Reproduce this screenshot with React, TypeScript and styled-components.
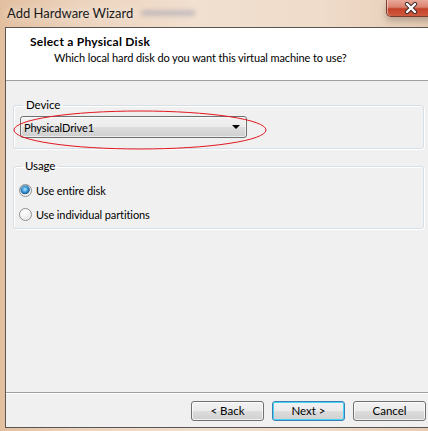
import React from "react";
import styled, { createGlobalStyle } from "styled-components";

const GlobalStyle = createGlobalStyle`
  html, body { margin: 0; padding: 0; background: #e6c8ab; }
  * { box-sizing: border-box; }
`;

const UI_FONT = `"Segoe UI", Lato, "Noto Sans", sans-serif`;

const Window = styled.div`
  width: 428px;
  height: 431px;
  overflow: hidden;
  display: flex;
  flex-direction: column;
  font-family: ${UI_FONT};
  font-size: 11px;
  letter-spacing: -0.1px;
  color: #000;
  background: linear-gradient(90deg, #e2bf9f 0%, #ecd3bd 18%, #f1dfcf 45%, #efdccb 75%, #e7ccb4 100%);
`;

const TitleBar = styled.div`
  height: 27px;
  flex: none;
  display: flex;
  align-items: flex-start;
`;

const Caption = styled.span`
  margin: 4px 0 0 7px;
  font-size: 13px;
  letter-spacing: 0;
  line-height: 18px;
  color: #1a1a1a;
  text-shadow: 0 0 8px rgba(255, 255, 255, 0.9);
`;

const Smudge = styled.span`
  margin: 10px 0 0 8px;
  width: 54px;
  height: 6px;
  border-radius: 3px;
  background: rgba(150, 150, 170, 0.45);
  filter: blur(2px);
`;

const CloseButton = styled.div`
  margin-left: auto;
  margin-right: -7px;
  width: 49px;
  height: 17px;
  flex: none;
  display: flex;
  align-items: center;
  justify-content: center;
  border: 1px solid #7a3a2c;
  border-top: none;
  border-radius: 0 0 5px 5px;
  background: linear-gradient(180deg, #e9a898 0%, #d9826e 45%, #c4412a 55%, #cf5a3d 100%);
  box-shadow: inset 1px 0 0 rgba(255, 255, 255, 0.5), 0 4px 6px rgba(90, 80, 70, 0.35);
`;

const Client = styled.div`
  margin-left: 5px;
  width: 430px;
  height: 401px;
  flex: none;
  display: flex;
  flex-direction: column;
  background: #f0f0f0;
  border: 1px solid #5a5550;
`;

const Header = styled.div`
  height: 53px;
  flex: none;
  background: #ffffff;
  border-bottom: 1px solid #a0a0a0;
  padding: 6px 0 0 24px;
`;

const HeaderTitle = styled.div`
  font-weight: bold;
  font-size: 12px;
  letter-spacing: 0.25px;
  line-height: 16px;
`;

const HeaderSub = styled.div`
  line-height: 16px;
  padding-left: 24px;
`;

const Body = styled.div`
  flex: 1;
  padding: 16px 10px 0 7px;
  display: flex;
  flex-direction: column;
  gap: 9px;
`;

const Group = styled.fieldset<{ $pad: string }>`
  position: relative;
  margin: 0;
  padding: ${(p) => p.$pad};
  border: 1px solid #d5dfe5;
  border-radius: 3px;
  box-shadow: 1px 1px 0 #ffffff, inset 1px 1px 0 #ffffff;
  min-width: 0;
`;

const Legend = styled.legend`
  padding: 0 3px;
  margin-left: 3px;
  line-height: 16px;
  font-size: 11.5px;
`;

const Combo = styled.div`
  width: 227px;
  height: 22px;
  display: flex;
  align-items: center;
  padding: 0 6px 0 3px;
  border: 1px solid #707070;
  border-radius: 3px;
  background: linear-gradient(180deg, #f2f2f2 0%, #ebebeb 50%, #dddddd 51%, #cfcfcf 100%);
  box-shadow: inset 0 0 0 1px rgba(255, 255, 255, 0.6);
`;

const ComboText = styled.span`
  flex: 1;
`;

const Arrow = styled.span`
  width: 0;
  height: 0;
  border-left: 4px solid transparent;
  border-right: 4px solid transparent;
  border-top: 4px solid #000;
`;

const Highlight = styled.svg`
  position: absolute;
  left: -1px;
  top: -3px;
  pointer-events: none;
  overflow: visible;
`;

const RadioList = styled.div`
  display: flex;
  flex-direction: column;
  gap: 8px;
`;

const RadioRow = styled.label`
  display: flex;
  align-items: center;
  gap: 4px;
  height: 16px;
`;

const RadioDot = styled.span<{ $checked?: boolean }>`
  width: 13px;
  height: 13px;
  border-radius: 50%;
  border: 1px solid #8f8f8f;
  background: ${(p) =>
    p.$checked
      ? "radial-gradient(circle at 45% 40%, #b9e3ff 0%, #3c9bd9 30%, #1b5f95 50%, #e9e9e9 58%, #f6f6f6 100%)"
      : "radial-gradient(circle at 40% 35%, #ffffff 0%, #f4f4f4 40%, #d6d6d6 100%)"};
  box-shadow: inset 0 0 0 1px rgba(255, 255, 255, 0.5);
  flex: none;
`;

const Footer = styled.div`
  height: 35px;
  flex: none;
  border-top: 1px solid #a0a0a0;
  box-shadow: inset 0 1px 0 #ffffff;
  display: flex;
  justify-content: flex-end;
  align-items: flex-start;
  gap: 8px;
  padding: 8px 8px 0 0;
`;

const Button = styled.button<{ $default?: boolean }>`
  width: 73px;
  height: 20px;
  padding: 0;
  font-family: ${UI_FONT};
  font-size: 11.5px;
  line-height: 16px;
  color: #000;
  border: 1px solid ${(p) => (p.$default ? "#3c7fb1" : "#707070")};
  border-radius: 3px;
  background: linear-gradient(180deg, #f2f2f2 0%, #ebebeb 50%, #dddddd 51%, #cfcfcf 100%);
  box-shadow: inset 0 0 0 1px ${(p) => (p.$default ? "#48d3fb" : "rgba(255,255,255,0.7)")};
`;

export default function App() {
  return (
    <>
      <GlobalStyle />
      <Window>
        <TitleBar>
          <Caption>Add Hardware Wizard</Caption>
          <Smudge />
          <CloseButton>
            <svg width="14" height="12" viewBox="0 0 14 12">
              <path d="M3 2 L11 10 M11 2 L3 10" stroke="#3b2a2a" strokeWidth="4.2" strokeLinecap="round" />
              <path d="M3 2 L11 10 M11 2 L3 10" stroke="#ffffff" strokeWidth="2.4" strokeLinecap="round" />
            </svg>
          </CloseButton>
        </TitleBar>
        <Client>
          <Header>
            <HeaderTitle>Select a Physical Disk</HeaderTitle>
            <HeaderSub>Which local hard disk do you want this virtual machine to use?</HeaderSub>
          </Header>
          <Body>
            <Group $pad="3px 0 10px 6px">
              <Legend>Device</Legend>
              <Combo>
                <ComboText>PhysicalDrive1</ComboText>
                <Arrow />
              </Combo>
              <Highlight width="254" height="40">
                <ellipse cx="127" cy="20" rx="126" ry="19" fill="none" stroke="#e3161f" strokeWidth="1" />
              </Highlight>
            </Group>
            <Group $pad="8px 0 6px 5px">
              <Legend>Usage</Legend>
              <RadioList>
                <RadioRow>
                  <RadioDot $checked />
                  Use entire disk
                </RadioRow>
                <RadioRow>
                  <RadioDot />
                  Use individual partitions
                </RadioRow>
              </RadioList>
            </Group>
          </Body>
          <Footer>
            <Button>&lt; Back</Button>
            <Button $default>Next &gt;</Button>
            <Button>Cancel</Button>
          </Footer>
        </Client>
      </Window>
    </>
  );
}
